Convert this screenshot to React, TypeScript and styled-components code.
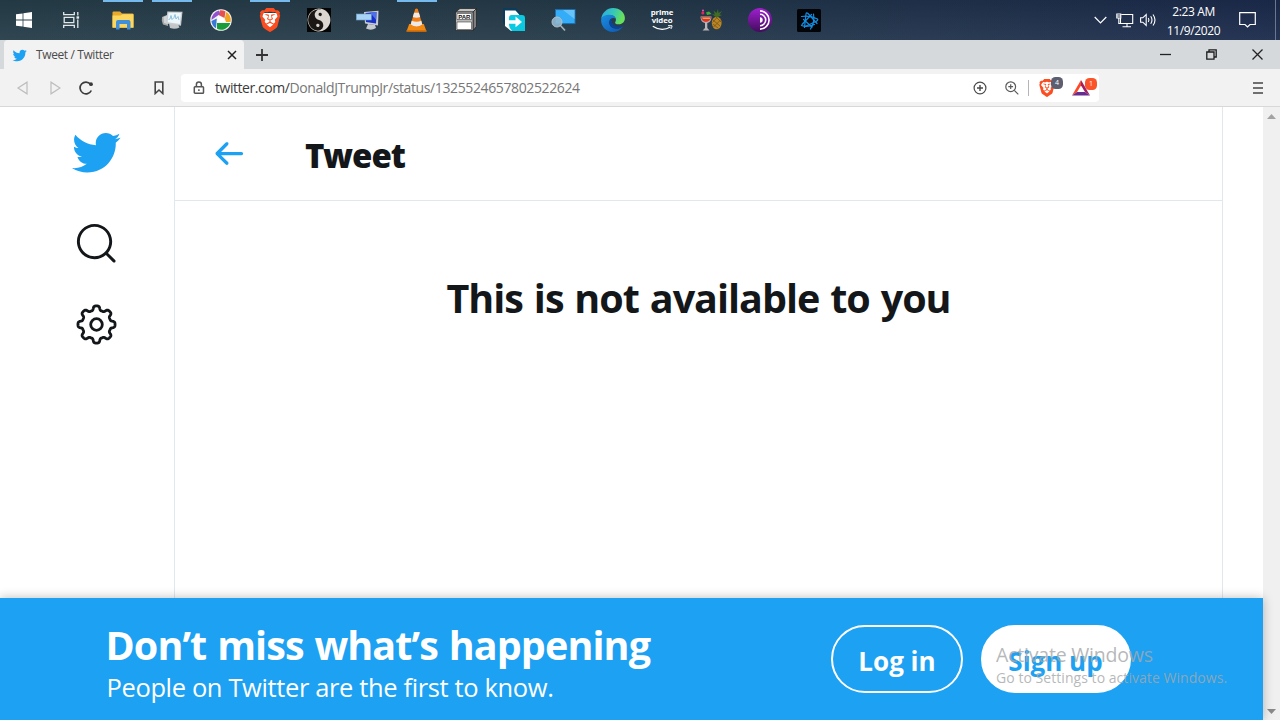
import React from "react";
import styled, { createGlobalStyle } from "styled-components";
import { SiBrave } from "react-icons/si";

const font = '"Open Sans", "Noto Sans", sans-serif';

const GlobalStyle = createGlobalStyle`
  * { box-sizing: border-box; }
  body { margin: 0; overflow: hidden; font-family: ${font}; color: #14171a; background: #fff; }
  svg { display: block; flex: none; }
`;

const Desktop = styled.div`
  display: flex;
  flex-direction: column;
  width: 1280px;
  height: 720px;
  overflow: hidden;
`;

/* ---------- Taskbar ---------- */

const Taskbar = styled.header`
  display: flex;
  flex: none;
  height: 40px;
  color: #fff;
  background:
    linear-gradient(180deg, rgba(0, 0, 0, 0.06), rgba(255, 255, 255, 0.05)),
    linear-gradient(90deg, #253c48 0%, #243a47 40%, #20334a 65%, #1b2a4b 100%);
`;

const SystemSlot = styled.div<{ $width: number }>`
  display: flex;
  align-items: center;
  justify-content: center;
  width: ${(p) => p.$width}px;
`;

const AppList = styled.div`
  display: flex;
  flex: 1;
  margin-left: 3px;
`;

const AppSlot = styled.div<{ $active?: boolean }>`
  position: relative;
  display: flex;
  align-items: center;
  justify-content: center;
  width: 49.05px;
  &::before {
    content: "";
    display: ${(p) => (p.$active ? "block" : "none")};
    position: absolute;
    top: 0;
    left: 5px;
    width: 40px;
    height: 2px;
    background: #76b9ed;
  }
`;

const Tray = styled.div`
  display: flex;
  align-items: center;
  gap: 6px;
  margin-right: 7px;
  svg:first-child { margin-right: 3px; }
`;

const Clock = styled.div`
  display: flex;
  flex-direction: column;
  align-items: center;
  width: 57px;
  margin-right: 17px;
  padding-top: 3px;
  font-size: 12px;
  line-height: 18.7px;
  letter-spacing: -0.36px;
  white-space: nowrap;
`;

const PeekEdge = styled.div`
  width: 5px;
  border-left: 1px solid #6c7690;
`;

const PrimeLogo = styled.div`
  display: flex;
  flex-direction: column;
  align-items: center;
  font: 700 7.8px/7.5px ${font};
  letter-spacing: -0.1px;
  svg { margin-top: 1px; }
`;

/* ---------- Browser chrome ---------- */

const TabStrip = styled.div`
  display: flex;
  flex: none;
  height: 29px;
  padding-left: 4px;
  background: #d5d9dc;
`;

const Tab = styled.div`
  display: flex;
  align-items: center;
  width: 240px;
  padding: 1px 7px 0 8px;
  border-radius: 4px 4px 0 0;
  background: #f2f2f2;
`;

const TabTitle = styled.span`
  flex: 1;
  margin: -1px 0 0 9px;
  font-size: 12px;
  letter-spacing: -0.39px;
  color: #4c4c4c;
`;

const NewTab = styled.div`
  display: flex;
  flex: 1;
  align-items: center;
  padding: 1px 0 0 12px;
`;

const WindowControls = styled.div`
  display: flex;
  align-items: center;
  gap: 35px;
  padding-right: 17.5px;
`;

const Toolbar = styled.div`
  display: flex;
  flex: none;
  align-items: center;
  height: 38px;
  padding-left: 16px;
  background: #f2f2f2;
  border-bottom: 1px solid #d6d8da;
`;

const NavGroup = styled.div`
  display: flex;
  align-items: center;
  gap: 18.5px;
  width: 165px;
  svg:last-child { margin-left: 42.5px; }
`;

const AddressBar = styled.div`
  display: flex;
  align-items: center;
  width: 918px;
  height: 28px;
  padding: 0 2px 0 12px;
  border-radius: 4px;
  background: #fff;
`;

const Url = styled.div`
  flex: 1;
  margin-left: 10px;
  font-size: 14px;
  letter-spacing: -0.38px;
  color: #777;
  b { font-weight: 400; color: #3c3c3c; letter-spacing: -0.45px; }
`;

const AddressActions = styled.div`
  display: flex;
  align-items: center;
  gap: 18px;
`;

const Extensions = styled.div`
  display: flex;
  align-items: center;
  gap: 9px;
  margin-left: 9px;
  padding-left: 9px;
  border-left: 1px solid #b5b5b5;
  height: 16px;
`;

const Extension = styled.div`
  position: relative;
  display: flex;
  align-items: center;
  width: 25px;
`;

const Badge = styled.span<{ $color: string }>`
  position: absolute;
  top: -2px;
  right: 0;
  width: 12px;
  height: 12px;
  border-radius: 4.5px;
  background: ${(p) => p.$color};
  color: #fff;
  font-size: 7px;
  line-height: 12px;
  text-align: center;
`;

const MenuButton = styled.div`
  display: flex;
  flex: 1;
  justify-content: flex-end;
  padding-right: 17px;
`;

/* ---------- Page ---------- */

const Viewport = styled.main`
  display: flex;
  flex: 1;
  min-height: 0;
`;

const Page = styled.div`
  display: flex;
  flex-direction: column;
  width: 1263px;
`;

const PageBody = styled.div`
  display: flex;
  flex: 1;
`;

const SideNav = styled.nav`
  display: flex;
  flex-direction: column;
  align-items: center;
  width: 174px;
  padding: 20px 0 0 18px;
`;

const NavIcon = styled.div<{ $gap?: number }>`
  margin-top: ${(p) => p.$gap ?? 0}px;
`;

const Column = styled.section`
  width: 1049px;
  border: solid #e1e8ed;
  border-width: 0 1.5px;
`;

const ColumnHeader = styled.div`
  display: flex;
  align-items: center;
  height: 94px;
  padding-left: 34px;
  border-bottom: 1.5px solid #e1e8ed;
`;

const ColumnTitle = styled.h2`
  margin: 4px 0 0 57px;
  font: 900 33px/40px "Noto Sans", sans-serif;
  letter-spacing: -0.95px;
`;

const Notice = styled.h1`
  margin: 72px 0 0;
  text-align: center;
  font-size: 39.5px;
  line-height: 50px;
  font-weight: 700;
  letter-spacing: -1px;
  word-spacing: 1.6px;
`;

const Banner = styled.footer`
  position: relative;
  display: flex;
  align-items: flex-start;
  height: 122px;
  padding: 27px 0 0 107px;
  background: #1da1f2;
  color: #fff;
  box-shadow: 0 0 10px rgba(0, 0, 0, 0.27);
`;

const BannerText = styled.div`
  width: 724px;
  white-space: nowrap;
`;

const BannerTitle = styled.div`
  margin: -5px 0 0 -1.5px;
  font-size: 39.5px;
  line-height: 50px;
  font-weight: 700;
  letter-spacing: -0.9px;
  word-spacing: 1.4px;
`;

const BannerSubtitle = styled.div`
  margin: 0 0 0 -0.5px;
  font-size: 25.5px;
  line-height: 34px;
  letter-spacing: -0.37px;
`;

const PillButton = styled.button<{ $filled?: boolean; $width: number }>`
  width: ${(p) => p.$width}px;
  height: 68px;
  margin-right: 17.5px;
  padding: 3px 0 0;
  border: 2px solid #fff;
  border-radius: 34px;
  background: ${(p) => (p.$filled ? "#fff" : "transparent")};
  color: ${(p) => (p.$filled ? "#1da1f2" : "#fff")};
  font: 700 26px/34px ${font};
`;

const Watermark = styled.div`
  position: absolute;
  left: 996px;
  top: 44px;
  color: rgba(165, 168, 170, 0.82);
  white-space: nowrap;
`;

const WatermarkTitle = styled.div`
  font-size: 19.5px;
  line-height: 25px;
  letter-spacing: -0.2px;
`;

const WatermarkHint = styled.div`
  font-size: 14px;
  line-height: 22px;
  letter-spacing: 0.05px;
`;

const Scrollbar = styled.div`
  display: flex;
  flex-direction: column;
  align-items: center;
  justify-content: space-between;
  width: 17px;
  padding: 7px 0 6px;
  background: #f0f0f0;
`;

/* ---------- Icons ---------- */

const BIRD =
  "M23.643 4.937c-.835.37-1.732.62-2.675.733.962-.576 1.7-1.49 2.048-2.578-.9.534-1.897.922-2.958 1.13-.85-.904-2.06-1.47-3.4-1.47-2.572 0-4.658 2.086-4.658 4.66 0 .364.042.718.12 1.06-3.873-.195-7.304-2.05-9.602-4.868-.4.69-.63 1.49-.63 2.342 0 1.616.823 3.043 2.072 3.878-.764-.025-1.482-.234-2.11-.583v.06c0 2.257 1.605 4.14 3.737 4.568-.392.106-.803.162-1.227.162-.3 0-.593-.028-.877-.082.593 1.85 2.313 3.198 4.352 3.234-1.595 1.25-3.604 1.995-5.786 1.995-.376 0-.747-.022-1.112-.065 2.062 1.323 4.51 2.093 7.14 2.093 8.57 0 13.255-7.098 13.255-13.254 0-.2-.005-.402-.014-.602.91-.658 1.7-1.477 2.323-2.41z";
const SEARCH =
  "M21.53 20.47l-3.66-3.66C19.195 15.24 20 13.214 20 11c0-4.97-4.03-9-9-9s-9 4.03-9 9 4.03 9 9 9c2.215 0 4.24-.804 5.808-2.13l3.66 3.66c.147.146.34.22.53.22s.385-.073.53-.22c.295-.293.295-.767.002-1.06zM3.5 11c0-4.135 3.365-7.5 7.5-7.5s7.5 3.365 7.5 7.5-3.365 7.5-7.5 7.5-7.5-3.365-7.5-7.5z";
const BACK =
  "M20 11H7.414l4.293-4.293c.39-.39.39-1.023 0-1.414s-1.023-.39-1.414 0l-6 6c-.39.39-.39 1.023 0 1.414l6 6c.195.195.45.293.707.293s.512-.098.707-.293c.39-.39.39-1.023 0-1.414L7.414 13H20c.553 0 1-.447 1-1s-.447-1-1-1z";

const Glyph = ({ d, size, color = "#14171a" }: { d: string; size: number; color?: string }) => (
  <svg width={size} height={size} viewBox="0 0 24 24" fill={color}>
    <path d={d} />
  </svg>
);

/* Eight rounded teeth traced as a smooth polar curve. */
const gearPath =
  Array.from({ length: 240 }, (_, i) => {
    const a = (i / 240) * Math.PI * 2;
    const r = 16.5 + 2.05 * (Math.tanh(2.2 * Math.cos(8 * a)) / Math.tanh(2.2));
    return `${i ? "L" : "M"}${(20.5 + r * Math.cos(a)).toFixed(2)} ${(20.5 + r * Math.sin(a)).toFixed(2)}`;
  }).join("") + "Z";

const Gear = () => (
  <svg width="41" height="41" viewBox="0 0 41 41" fill="none" stroke="#14171a" strokeWidth="2.8" strokeLinejoin="round">
    <path d={gearPath} />
    <circle cx="20.5" cy="20.5" r="5.8" />
  </svg>
);

const WindowsLogo = () => (
  <svg width="16" height="16" viewBox="0 0 16 16" fill="#fff">
    <path d="M0 2.3L6.6 1.4V7.6H0zM7.4 1.3L16 0V7.6H7.4zM0 8.4H6.6V14.6L0 13.7zM7.4 8.4H16V16L7.4 14.8z" />
  </svg>
);

const TaskView = () => (
  <svg width="17" height="16" viewBox="0 0 17 16" fill="none" stroke="#e4e8ea" strokeWidth="1.3">
    <path d="M.7 0V2.6H11.3V0M.7 16V13.4H11.3V16M1.2 5.3H10.8V10.7H1.2zM14.8 0V3.4M14.8 7.6V16" />
    <path d="M13.5 5.5H16.1" strokeWidth="2.4" />
  </svg>
);

const Folder = () => (
  <svg width="22" height="19" viewBox="0 0 22 19">
    <path d="M.5 1.5Q.5.5 1.5.5H8L10 2.5H20.5Q21.5 2.5 21.5 3.5V16.5H.5z" fill="#e9a92b" />
    <path d="M.5 4.5H8.5L10.5 3.3H21.5V16.8H.5z" fill="#fbd75f" />
    <path d="M4 18.5V11Q4 9 6 9H16.5Q18.5 9 18.5 11V18.5H15V13H7.5V18.5z" fill="#3f8fdb" />
  </svg>
);

const Monitor = () => (
  <svg width="22" height="20" viewBox="0 0 22 20">
    <path d="M1 7L7 4.500V16L2 14.500Q.2 11 1 7z" fill="#a4a9ab" />
    <path d="M2.500 7L6.500 5.300V14L3 13z" fill="#d0d4d5" />
    <path d="M8 13.500L17 14.500L18.500 17.500Q14 19.800 9 18z" fill="#c2c6c8" />
    <path d="M6.300 1.500L21.500 1.800L20 15.800L5.300 13.500z" fill="#c9cdd0" />
    <path d="M7.500 2.800L20 3L18.800 14L6.700 12.200z" fill="#ecf7fc" />
    <path d="M7.500 9.500L9 9 10 5.500 11 9.500 13 7.500 14 4.500 15 9 17 6.500 18 10" fill="none" stroke="#83b9dd" strokeWidth=".9" />
  </svg>
);

const Picasa = () => (
  <svg width="22" height="22" viewBox="0 0 22 22">
    <circle cx="11" cy="11" r="10.8" fill="#f4f4f4" />
    <path d="M10 1.300A9.700 9.700 0 0 1 15.500 2.500L14.500 9L8.500 6z" fill="#e5504f" />
    <path d="M16.300 3A9.700 9.700 0 0 1 20.600 13H16L14.800 9.500z" fill="#f2a322" />
    <path d="M20.300 14A9.700 9.700 0 0 1 7 19.800L7 14z" fill="#189c3b" />
    <path d="M6 19.300A9.700 9.700 0 0 1 1.400 12L6.800 9.500z" fill="#3a78d8" />
    <path d="M1.400 11A9.700 9.700 0 0 1 9 1.500L10 5z" fill="#9152cf" />
    <path d="M8.500 7L13.500 9L15 13.300H7.500L7.300 10z" fill="#fff" />
  </svg>
);

const BraveLogo = ({ size }: { size: number }) => (
  <svg width={size} height={size} viewBox="0 0 24 24">
    <path d="M5 5H19L20 10L17 18L12 22L7 18L4 10z" fill="#fff" />
    <SiBrave size={24} color="#fb4d20" />
  </svg>
);

const YinYang = () => (
  <svg width="24" height="24" viewBox="0 0 24 24">
    <rect width="24" height="24" fill="#050505" />
    <g transform="rotate(12 12 12)">
      <circle cx="12" cy="12" r="11.400" fill="#dcd6d0" />
      <path d="M12 1.200A10.800 10.800 0 0 0 12 22.800A5.400 5.400 0 0 0 12 12A5.400 5.400 0 0 1 12 1.200z" fill="#1a1714" />
      <circle cx="12" cy="6.300" r="1.700" fill="#1a1714" />
      <circle cx="12" cy="17.500" r="1.700" fill="#dcd6d0" />
    </g>
  </svg>
);

const RunDialog = () => (
  <svg width="23" height="21" viewBox="0 0 23 21">
    <path d="M8 2L22.500 .8L22 15.500L9 13.500z" fill="#c9ccd2" />
    <path d="M9.500 3L20.500 2L20 13.500L10 12z" fill="#1a30c8" />
    <path d="M14 2.600L20.500 2L20.200 10z" fill="#5070e8" />
    <path d="M12 14L19 15L20 18Q15 21 10 18.500z" fill="#c7cbd0" />
    <rect x=".3" y="4" width="15" height="6" fill="#a9d3f5" stroke="#6a9fca" strokeWidth=".6" />
  </svg>
);

const Vlc = () => (
  <svg width="21" height="24" viewBox="0 0 21 24">
    <path d="M3.2 16H17.8L20.5 23.4H.5z" fill="#f28a12" />
    <path d="M.5 22.2H20.5V23.6H.5z" fill="#d56c05" />
    <path d="M9.2 1Q10.5 0 11.8 1L16.5 17Q10.5 21 4.5 17z" fill="#f47e14" />
    <path d="M8.1 4.8H12.9L14.2 9Q10.5 10.5 6.8 9zM5.7 12.8Q10.5 14.8 15.3 12.8L16.3 16.5Q10.5 20.5 4.7 16.5z" fill="#eceae8" />
  </svg>
);

const ParFile = () => (
  <svg width="22" height="24" viewBox="0 0 22 24" stroke="#1e1e1e" strokeWidth=".7">
    <path d="M.5 4L5 .5H21.5L18 4z" fill="#c4c4c4" />
    <path d="M18 4L21.5 .5V18.5L18 22.5z" fill="#7e7e7e" />
    <path d="M.5 4H18V22.5H.5z" fill="#b9b9b9" />
    <path d="M2 5.500H16.500V11.500H2zM2 14H16.500V21.500H2z" fill="#fff" strokeWidth=".5" />
    <text x="9.300" y="10.700" stroke="none" fill="#111" fontSize="6" fontWeight="700" textAnchor="middle" fontFamily="Liberation Sans, sans-serif">PAR</text>
  </svg>
);

const ShareApp = () => (
  <svg width="23" height="24" viewBox="0 0 23 24">
    <path d="M0 0H13L17 4V18H3L0 15z" fill="#0a3c5c" />
    <path d="M5 7H19Q22 7 22 10V23H8L5 20z" fill="#0cc9e2" />
    <path d="M2 2.500H12.500L16.500 7H8.500Q6 7 6 10V17Q6 20 9 22.800H8L2 18z" fill="#fff" />
    <path d="M6 12.200H12.500V8.500L19 14L12.500 19.200V15.700H6z" fill="#fff" />
  </svg>
);

const Magnifier = () => (
  <svg width="25" height="23" viewBox="0 0 25 23">
    <rect x="4.5" y=".6" width="19.5" height="14" fill="#35acf7" stroke="#1d6fae" />
    <path d="M12 1H23.5V10z" fill="#68c3fb" />
    <path d="M9 16L14 21.5" stroke="#a5b0b6" strokeWidth="1.7" />
    <circle cx="6" cy="13" r="5" fill="#91b8cf" fillOpacity=".9" stroke="#b3bfc7" />
  </svg>
);

const Edge = () => (
  <svg width="24" height="24" viewBox="0 0 24 24">
    <defs>
      <linearGradient id="edgeTop" x1="0" y1="0" x2="1" y2="0.3">
        <stop offset="0" stopColor="#2aa9e2" />
        <stop offset=".55" stopColor="#36c7b8" />
        <stop offset="1" stopColor="#69e05a" />
      </linearGradient>
      <linearGradient id="edgeBottom" x1="0" y1="0" x2="1" y2="1">
        <stop offset="0" stopColor="#1a8ee0" />
        <stop offset="1" stopColor="#0d55b0" />
      </linearGradient>
    </defs>
    <path d="M.2 11C.9 4.800 6 .1 12 .1C19 .1 23.9 5 23.9 10C23.9 14 21 16.300 17.600 16.300C14.500 16.300 13.500 15 14.300 13.900C16 11.500 14.500 7.200 9.500 7.200C5 7.200 1.500 9 .2 11z" fill="url(#edgeTop)" />
    <path d="M.1 12C.4 8.500 4 6.800 8.500 6.800C12 6.800 14 8.500 14.500 10.500C11.500 8.800 8.300 11 8.300 14.500C8.300 19 13 21.500 17.500 20.500C19.800 20 21.500 18.500 22.300 18C20 22 16 24 12 23.900C5 23.900 0 18.500 .1 12z" fill="url(#edgeBottom)" />
    <path d="M10.500 10.500C8.600 11.500 8.100 13 8.300 15C8.700 19 13 21.500 17.500 20.500C20 19.900 21.800 18.500 22.300 18C18 20 10 18.500 10.500 10.500z" fill="#0a4496" />
  </svg>
);

const PrimeSmile = () => (
  <svg width="21" height="6" viewBox="0 0 21 6" fill="none" stroke="#fff">
    <path d="M.8 1.200Q9.500 7 18.500 2" strokeWidth="1.300" />
    <path d="M16 .7H20Q20.300 2 18.800 4" strokeWidth="1" />
  </svg>
);

const Cocktail = () => (
  <svg width="22" height="23" viewBox="0 0 22 23">
    <path d="M.5 7.500H11.500Q11.500 13 7.300 14V19L9.500 21.500H2.500L5 19V14Q.5 13 .5 7.500z" fill="#b9b3b5" />
    <path d="M1 8H11Q10.500 12.500 6 13Q1.500 12.500 1 8z" fill="#de3527" />
    <path d="M2 8.500H10V10H3z" fill="#f79a52" />
    <path d="M6 3.500L9 2.500L11.500 5L7 6z" fill="#41ad35" />
    <circle cx="2.800" cy="4" r="1.500" fill="#e2285c" />
    <circle cx="3" cy="1.500" r="1.100" fill="#e650a5" />
    <ellipse cx="16.700" cy="14" rx="4.900" ry="6.300" fill="#b98526" />
    <path d="M13 11L20 17M13 15L18.500 19.500M20.500 11L13.500 18M17 8.500L12.500 13.500M16 8L21 13" stroke="#7a5212" strokeWidth=".8" />
    <path d="M16.500 8.500L12 5L15 5.500L13.500 1.500L16.500 4L18 0L18.500 4L22 2L19.500 5.500L22 6z" fill="#3f6d25" />
  </svg>
);

const Tor = () => (
  <svg width="24" height="24" viewBox="0 0 24 24">
    <defs>
      <linearGradient id="tor" x1="0" y1="0" x2="0" y2="1">
        <stop offset="0" stopColor="#a01fd0" />
        <stop offset="1" stopColor="#420c5d" />
      </linearGradient>
    </defs>
    <circle cx="12" cy="12" r="12" fill="url(#tor)" />
    <g fill="none" stroke="#fff" strokeWidth="1.600">
      <path d="M12 2.900A9.100 9.100 0 0 1 12 21.100M12 6.300A5.700 5.700 0 0 1 12 17.700" />
    </g>
    <path d="M12 9.300A2.700 2.700 0 0 1 12 14.700z" fill="#fff" />
  </svg>
);

const BattleNet = () => (
  <svg width="24" height="23" viewBox="0 0 24 23">
    <rect width="24" height="23" rx="1.500" fill="#020407" />
    <g fill="none" stroke="#148de0" strokeWidth="1.200" strokeLinecap="round" strokeLinejoin="round">
      <path d="M7.500 18.500L9 5Q9.300 3 11 4.500L20 14.500" />
      <path d="M4.500 7.500Q13 6 20.500 10Q21.500 11 19 12.500L8 17.500" />
      <path d="M4.500 16.500Q10 18.500 17.500 15.500M5 15.500L14.500 5.500M16.500 5Q18 13 13.500 20" />
      <path d="M6.500 10.500L15 18" />
    </g>
  </svg>
);

const Chevron = () => (
  <svg width="13" height="8" viewBox="0 0 13 8" fill="none" stroke="#fff" strokeWidth="1.200">
    <path d="M.7 1L6.500 6.800L12.300 1" />
  </svg>
);

const Network = () => (
  <svg width="18" height="15" viewBox="0 0 18 15" fill="none" stroke="#fff" strokeWidth="1.100">
    <path d="M5.500 1.500H16.700V10.500H4.500V5.500M11 10.500V13.500M6.500 13.700H15M.8 1H4.800V5H.8zM2.800 5V10.500H4.500M1 3H5" />
  </svg>
);

const Speaker = () => (
  <svg width="18" height="14" viewBox="0 0 18 14" fill="none" stroke="#fff" strokeWidth="1.100">
    <path d="M.6 4.800H2.800L6.200 1.500V12.500L2.800 9.200H.6z" />
    <path d="M8.300 5Q9.600 7 8.300 9M10.700 3.200Q13.300 7 10.700 10.800M13 1.500Q17 7 13 12.500" />
  </svg>
);

const ActionCenter = () => (
  <svg width="17" height="16" viewBox="0 0 17 16" fill="none" stroke="#fff" strokeWidth="1.200">
    <path d="M.7 .7H16.300V12.500H11L8.500 15L6 12.500H.7z" />
  </svg>
);

const Line = ({ d, w, h, color = "#222", sw = 1.3 }: { d: string; w: number; h: number; color?: string; sw?: number }) => (
  <svg width={w} height={h} viewBox={`0 0 ${w} ${h}`} fill="none" stroke={color} strokeWidth={sw}>
    <path d={d} />
  </svg>
);

const Reload = () => (
  <svg width="14" height="14" viewBox="0 0 14 14" fill="none" stroke="#3b3b3b" strokeWidth="1.700">
    <path d="M12.300 9.500A5.900 5.900 0 1 1 11.500 3.200" />
    <circle cx="12" cy="3.200" r="1.900" fill="#3b3b3b" stroke="none" />
  </svg>
);

const Lock = () => (
  <svg width="12" height="14" viewBox="0 0 12 14" fill="none" stroke="#555" strokeWidth="1.500">
    <rect x="1.300" y="5.700" width="9.200" height="6.600" rx=".8" />
    <path d="M3.400 5.500V3.600A2.500 2.500 0 0 1 8.400 3.600V5.500M5.900 8.200V9.900" />
  </svg>
);

const CirclePlus = () => (
  <svg width="14" height="14" viewBox="0 0 14 14" fill="none" stroke="#4a4a4a" strokeWidth="1.200">
    <circle cx="7" cy="7" r="5.900" />
    <path d="M7 4V10M4 7H10" strokeWidth="1.400" />
  </svg>
);

const ZoomIn = () => (
  <svg width="14" height="14" viewBox="0 0 14 14" fill="none" stroke="#5a5a5a" strokeWidth="1.200">
    <circle cx="5.700" cy="5.700" r="4.900" />
    <path d="M9.300 9.300L13.300 13.300M5.700 3.300V8.100M3.300 5.700H8.100" />
  </svg>
);

const BatTriangle = () => (
  <svg width="18" height="16" viewBox="0 0 18 16">
    <path d="M9 0L0 15.500L5 12L9 5.500z" fill="#ff4724" />
    <path d="M0 15.500H18L13 12H5z" fill="#662d91" />
    <path d="M9 0L18 15.500L13 12L9 5.500z" fill="#9e1f63" />
  </svg>
);

const Restore = () => (
  <svg width="11" height="11" viewBox="0 0 11 11" fill="none" stroke="#1b1b1b" strokeWidth="1.300">
    <path d="M.8 3H8V10.200H.8zM3 3V.8H10.200V8H8" />
  </svg>
);

const apps: { icon: React.ReactNode; active?: boolean }[] = [
  { icon: <Folder />, active: true },
  { icon: <Monitor />, active: true },
  { icon: <Picasa /> },
  { icon: <BraveLogo size={24} />, active: true },
  { icon: <YinYang /> },
  { icon: <RunDialog /> },
  { icon: <Vlc />, active: true },
  { icon: <ParFile /> },
  { icon: <ShareApp /> },
  { icon: <Magnifier /> },
  { icon: <Edge /> },
  {
    icon: (
      <PrimeLogo>
        <span>prime</span>
        <span>video</span>
        <PrimeSmile />
      </PrimeLogo>
    ),
  },
  { icon: <Cocktail /> },
  { icon: <Tor /> },
  { icon: <BattleNet /> },
];

export default function App() {
  return (
    <Desktop>
      <GlobalStyle />
      <Taskbar>
        <SystemSlot $width={48}><WindowsLogo /></SystemSlot>
        <SystemSlot $width={47}><TaskView /></SystemSlot>
        <AppList>
          {apps.map((app, i) => (
            <AppSlot key={i} $active={app.active}>{app.icon}</AppSlot>
          ))}
        </AppList>
        <Tray>
          <Chevron />
          <Network />
          <Speaker />
        </Tray>
        <Clock>
          <span>2:23 AM</span>
          <span>11/9/2020</span>
        </Clock>
        <SystemSlot $width={16}><ActionCenter /></SystemSlot>
        <SystemSlot $width={20} />
        <PeekEdge />
      </Taskbar>

      <TabStrip>
        <Tab>
          <Glyph d={BIRD} size={15} color="#1da1f2" />
          <TabTitle>Tweet / Twitter</TabTitle>
          <Line d="M1 1L9 9M9 1L1 9" w={10} h={10} sw={1.5} />
        </Tab>
        <NewTab>
          <Line d="M6 0V12M0 6H12" w={12} h={12} sw={1.8} color="#333" />
        </NewTab>
        <WindowControls>
          <Line d="M0 5.500H11" w={11} h={11} />
          <Restore />
          <Line d="M.5 .5L10.500 10.500M10.500 .5L.5 10.500" w={11} h={11} />
        </WindowControls>
      </TabStrip>

      <Toolbar>
        <NavGroup>
          <Line d="M11 1.200V12.800L2 7z" w={13} h={14} color="#bdbdbd" sw={1.2} />
          <Line d="M3 1.200V12.800L12 7z" w={13} h={14} color="#bdbdbd" sw={1.2} />
          <Reload />
          <Line d="M1.200 1H8.800V12.500L5 9L1.200 12.500z" w={10} h={14} color="#444" sw={1.6} />
        </NavGroup>
        <AddressBar>
          <Lock />
          <Url><b>twitter.com/</b>DonaldJTrumpJr/status/1325524657802522624</Url>
          <AddressActions>
            <CirclePlus />
            <ZoomIn />
          </AddressActions>
          <Extensions>
            <Extension>
              <BraveLogo size={18} />
              <Badge $color="#5d5e70">4</Badge>
            </Extension>
            <Extension>
              <BatTriangle />
              <Badge $color="#fb542b">1</Badge>
            </Extension>
          </Extensions>
        </AddressBar>
        <MenuButton>
          <Line d="M0 1H10M0 6H10M0 11H10" w={10} h={12} color="#444" sw={1.7} />
        </MenuButton>
      </Toolbar>

      <Viewport>
        <Page>
          <PageBody>
            <SideNav>
              <NavIcon><Glyph d={BIRD} size={51.5} color="#1da1f2" /></NavIcon>
              <NavIcon $gap={41.5}><Glyph d={SEARCH} size={47} /></NavIcon>
              <NavIcon $gap={37}><Gear /></NavIcon>
            </SideNav>
            <Column>
              <ColumnHeader>
                <Glyph d={BACK} size={39} color="#1da1f2" />
                <ColumnTitle>Tweet</ColumnTitle>
              </ColumnHeader>
              <Notice>This is not available to you</Notice>
            </Column>
          </PageBody>
          <Banner>
            <BannerText>
              <BannerTitle>Don’t miss what’s happening</BannerTitle>
              <BannerSubtitle>People on Twitter are the first to know.</BannerSubtitle>
            </BannerText>
            <PillButton $width={132}>Log in</PillButton>
            <PillButton $width={150} $filled>Sign up</PillButton>
            <Watermark>
              <WatermarkTitle>Activate Windows</WatermarkTitle>
              <WatermarkHint>Go to Settings to activate Windows.</WatermarkHint>
            </Watermark>
          </Banner>
        </Page>
        <Scrollbar>
          <svg width="9" height="5" viewBox="0 0 9 5" fill="#a3a3a3"><path d="M4.500 0L9 5H0z" /></svg>
          <svg width="9" height="5" viewBox="0 0 9 5" fill="#8a8a8a"><path d="M4.500 5L0 0H9z" /></svg>
        </Scrollbar>
      </Viewport>
    </Desktop>
  );
}
